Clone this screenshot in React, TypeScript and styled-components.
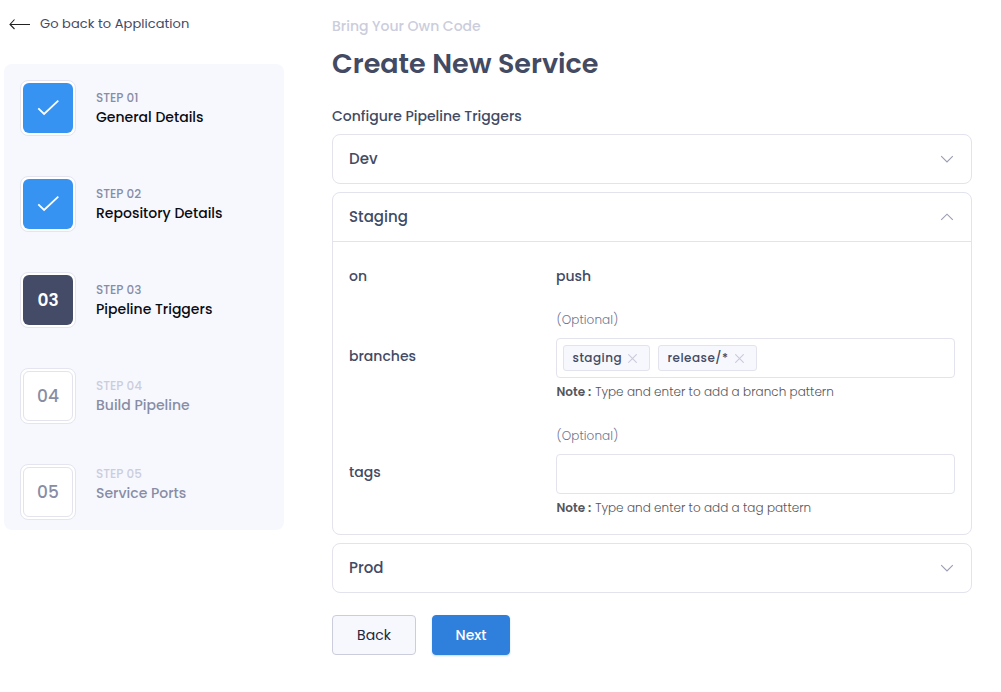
import React from "react";
import styled, { createGlobalStyle, css } from "styled-components";

const GlobalStyle = createGlobalStyle`
  *, *::before, *::after { box-sizing: border-box; }
  body {
    margin: 0;
    background: #fff;
    color: #434a63;
    font-family: Poppins, Inter, sans-serif;
  }
  button { font-family: inherit; }
  svg { display: block; flex: none; }
`;

const Page = styled.div`
  display: flex;
  align-items: flex-start;
  gap: 48px;
  width: 1001px;
  min-height: 692px;
  padding-left: 4px;
  white-space: nowrap;
`;

const Sidebar = styled.aside`
  width: 280px;
  flex: none;
`;

const BackLink = styled.a`
  display: flex;
  align-items: center;
  gap: 10px;
  height: 48px;
  margin-bottom: 16px;
  padding-left: 5px;
  font-size: 13px;
  line-height: 20px;
  letter-spacing: 0.06px;
  color: #434a63;
`;

const Steps = styled.ol`
  display: flex;
  flex-direction: column;
  gap: 40px;
  margin: 0;
  padding: 16px 16px 10px;
  list-style: none;
  border-radius: 8px;
  background: #f7f8fe;
`;

const Step = styled.li`
  display: flex;
  align-items: center;
  gap: 20px;
  height: 56px;

  &:last-child > div:last-child {
    margin-bottom: 16px;
  }
`;

type StepState = "done" | "current" | "todo";

const badgeStyles = {
  done: css`
    background: #3793f2;
    color: #fff;
  `,
  current: css`
    background: #444b66;
    color: #fff;
    font-weight: 600;
  `,
  todo: css`
    background: #fff;
    border: 1px solid #e2e3ed;
    color: #888da5;
    font-weight: 500;
  `,
};

const BadgeFrame = styled.div`
  flex: none;
  width: 56px;
  height: 56px;
  padding: 2px;
  border: 1px solid #e4e5ee;
  border-radius: 8px;
  background: #fff;
`;

const Badge = styled.div<{ $state: StepState }>`
  display: flex;
  align-items: center;
  justify-content: center;
  width: 50px;
  height: 50px;
  border-radius: 6px;
  font-size: 17px;
  ${(p) => badgeStyles[p.$state]}
`;

const StepText = styled.div`
  display: flex;
  flex-direction: column;
`;

const StepNumber = styled.span<{ $muted: boolean }>`
  font-size: 12px;
  line-height: 18px;
  font-weight: 500;
  color: ${(p) => (p.$muted ? "#cbcddc" : "#888da5")};
`;

const StepTitle = styled.span<{ $muted: boolean }>`
  font-size: 14px;
  line-height: 20px;
  font-weight: 500;
  color: ${(p) => (p.$muted ? "#888da5" : "#0b0b12")};
`;

const Main = styled.main`
  width: 640px;
  padding-top: 16px;
`;

const Eyebrow = styled.div`
  font-size: 14px;
  line-height: 20px;
  font-weight: 500;
  color: #cbcddc;
`;

const Title = styled.h1`
  margin: 7px 0 21px;
  font-size: 27px;
  line-height: 42px;
  font-weight: 600;
  color: #434a63;
`;

const SectionLabel = styled.div`
  margin-bottom: 7px;
  font-size: 14px;
  line-height: 21px;
  font-weight: 500;
`;

const Accordion = styled.div`
  display: flex;
  flex-direction: column;
  gap: 8px;
`;

const Panel = styled.section`
  border: 1px solid #e2e3ed;
  border-radius: 8px;
  background: #fff;
`;

const PanelHeader = styled.header<{ $open?: boolean }>`
  display: flex;
  align-items: center;
  justify-content: space-between;
  height: ${(p) => (p.$open ? 49 : 48)}px;
  padding: 0 17px 0 16px;
  border-bottom: ${(p) => (p.$open ? "1px solid #e2e3ed" : "0")};
`;

const PanelTitle = styled.span`
  font-size: 15px;
  line-height: 24px;
  font-weight: 500;
`;

const PanelBody = styled.div`
  display: flex;
  flex-direction: column;
  gap: 24px;
  padding: 24px 16px 16px;
`;

const Field = styled.div`
  display: grid;
  grid-template-columns: 207px 1fr;
  align-items: center;
`;

const FieldText = styled.span`
  font-size: 14px;
  line-height: 20px;
  font-weight: 500;
`;

const Optional = styled.div`
  margin-bottom: 8px;
  padding-left: 0.5px;
  font-size: 12px;
  line-height: 20px;
  font-weight: 300;
  letter-spacing: 0.1px;
  color: #6f758f;
`;

const TagInput = styled.div`
  display: flex;
  align-items: center;
  gap: 8px;
  height: 40px;
  padding: 0 6px;
  border: 1px solid #e2e3ed;
  border-radius: 4px;
`;

const Chip = styled.span`
  display: inline-flex;
  align-items: center;
  height: 26px;
  padding: 0 12px 0 8.5px;
  gap: 6px;
  border: 1px solid #e2e3ed;
  border-radius: 3px;
  background: #f7f8fe;
  font-size: 12px;
  font-weight: 500;
  letter-spacing: 0.47px;
`;

const Note = styled.div`
  margin-top: 4px;
  padding-left: 0.5px;
  font-size: 12px;
  line-height: 20px;
  font-weight: 300;
  letter-spacing: 0.02px;
  color: #55555b;
`;

const NoteLabel = styled.strong`
  margin-right: 4px;
  font-weight: 600;
`;

const Actions = styled.div`
  display: flex;
  gap: 16px;
  margin-top: 22px;
`;

const Button = styled.button<{ $primary?: boolean }>`
  width: ${(p) => (p.$primary ? 78 : 84)}px;
  height: 40px;
  padding: 0;
  border: 1px solid ${(p) => (p.$primary ? "#2f80dd" : "#cbccdc")};
  border-radius: 4px;
  background: ${(p) => (p.$primary ? "#2f80dd" : "#f7f8fe")};
  box-shadow: ${(p) => (p.$primary ? "0 1px 2px rgba(47, 128, 221, 0.3)" : "none")};
  color: ${(p) => (p.$primary ? "#fff" : "#22263a")};
  font-size: 14px;
  font-weight: ${(p) => (p.$primary ? 500 : 400)};
`;

const ArrowLeft = () => (
  <svg width="21" height="12" viewBox="0 0 21 12" fill="none" stroke="#222" strokeWidth="1.1">
    <path d="M21 6.5H1M5.5 1.5L1 6.5L5.5 11" />
  </svg>
);

const Check = () => (
  <svg width="24" height="18" viewBox="0 0 24 18" fill="none" stroke="#fff" strokeWidth="1.8">
    <path d="M2.3 9.3L8.1 15L22.3 1.6" />
  </svg>
);

const Chevron = ({ up = false }: { up?: boolean }) => (
  <svg width="14" height="8" viewBox="0 0 14 8" fill="none" stroke="#9a9cb2" strokeWidth="1.1">
    <path d={up ? "M1.2 6.9L7 1.2L12.8 6.9" : "M1.2 1.2L7 6.9L12.8 1.2"} />
  </svg>
);

const Cross = () => (
  <svg width="9" height="9" viewBox="0 0 9 9" fill="none" stroke="#c9cbdb" strokeWidth="1.1">
    <path d="M0.3 0.3L8.7 8.7M8.7 0.3L0.3 8.7" />
  </svg>
);

const steps: { number: string; title: string; state: StepState }[] = [
  { number: "01", title: "General Details", state: "done" },
  { number: "02", title: "Repository Details", state: "done" },
  { number: "03", title: "Pipeline Triggers", state: "current" },
  { number: "04", title: "Build Pipeline", state: "todo" },
  { number: "05", title: "Service Ports", state: "todo" },
];

const patternFields = [
  { label: "branches", tags: ["staging", "release/*"], note: "Type and enter to add a branch pattern" },
  { label: "tags", tags: [], note: "Type and enter to add a tag pattern" },
];

export default function App() {
  return (
    <>
      <GlobalStyle />
      <Page>
        <Sidebar>
          <BackLink>
            <ArrowLeft />
            Go back to Application
          </BackLink>
          <Steps>
            {steps.map((s) => (
              <Step key={s.number}>
                <BadgeFrame>
                  <Badge $state={s.state}>{s.state === "done" ? <Check /> : s.number}</Badge>
                </BadgeFrame>
                <StepText>
                  <StepNumber $muted={s.state === "todo"}>STEP {s.number}</StepNumber>
                  <StepTitle $muted={s.state === "todo"}>{s.title}</StepTitle>
                </StepText>
              </Step>
            ))}
          </Steps>
        </Sidebar>
        <Main>
          <Eyebrow>Bring Your Own Code</Eyebrow>
          <Title>Create New Service</Title>
          <SectionLabel>Configure Pipeline Triggers</SectionLabel>
          <Accordion>
            <Panel>
              <PanelHeader>
                <PanelTitle>Dev</PanelTitle>
                <Chevron />
              </PanelHeader>
            </Panel>
            <Panel>
              <PanelHeader $open>
                <PanelTitle>Staging</PanelTitle>
                <Chevron up />
              </PanelHeader>
              <PanelBody>
                <Field>
                  <FieldText>on</FieldText>
                  <FieldText>push</FieldText>
                </Field>
                {patternFields.map((field) => (
                  <Field key={field.label}>
                    <FieldText>{field.label}</FieldText>
                    <div>
                      <Optional>(Optional)</Optional>
                      <TagInput>
                        {field.tags.map((tag) => (
                          <Chip key={tag}>
                            {tag}
                            <Cross />
                          </Chip>
                        ))}
                      </TagInput>
                      <Note>
                        <NoteLabel>Note :</NoteLabel>
                        {field.note}
                      </Note>
                    </div>
                  </Field>
                ))}
              </PanelBody>
            </Panel>
            <Panel>
              <PanelHeader>
                <PanelTitle>Prod</PanelTitle>
                <Chevron />
              </PanelHeader>
            </Panel>
          </Accordion>
          <Actions>
            <Button>Back</Button>
            <Button $primary>Next</Button>
          </Actions>
        </Main>
      </Page>
    </>
  );
}
